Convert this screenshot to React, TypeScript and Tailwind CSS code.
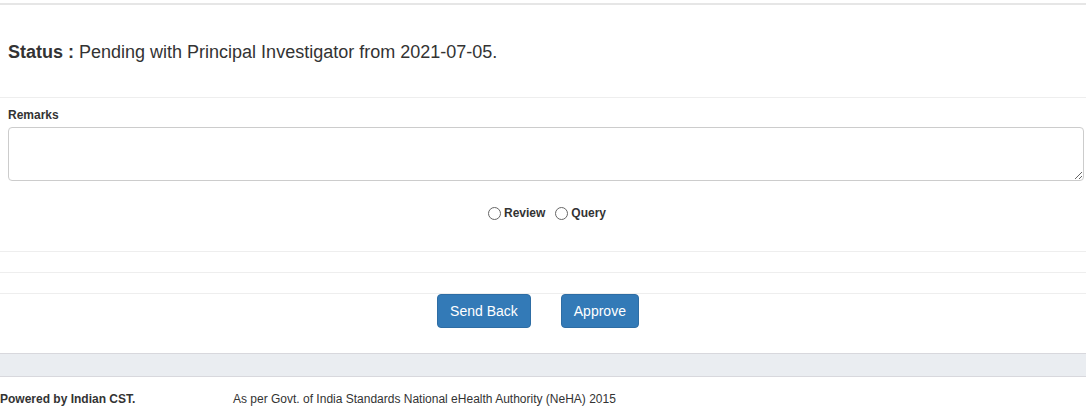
import React from "react";

function Radio({ label }: { label: string }) {
  return (
    <label className="flex items-center">
      <span className="w-[13px] h-[13px] rounded-full border border-[#666] bg-white mr-[3px]" />
      <span className="text-[12px] font-bold text-[#333]">{label}</span>
    </label>
  );
}

export default function App() {
  return (
    <div
      className="w-[1086px] h-[417px] bg-white text-[#333] overflow-hidden"
      style={{ fontFamily: '"Liberation Sans", Arial, sans-serif' }}
    >
      <div className="mt-[3px] border-t-2 border-[#e6e6e6]" />
      <div className="h-[92px] flex items-center pl-[8px] pt-[2px] text-[18px]">
        <span className="font-bold">Status :</span>
        <span className="ml-[5px]">Pending with Principal Investigator from 2021-07-05.</span>
      </div>
      <div className="border-t border-[#eeeeee]" />
      <div className="pl-[8px] pr-[2px] pt-[9px]">
        <div className="text-[12px] font-bold leading-[17px] h-[20px]">Remarks</div>
        <textarea className="block w-full h-[54px] border border-[#ccc] rounded-[4px] resize-y bg-white" />
      </div>
      <div className="h-[70px] flex justify-center items-start pt-[23px] gap-[10px] pl-[8px]">
        <Radio label="Review" />
        <Radio label="Query" />
      </div>
      <div className="border-t border-[#eeeeee] h-[21px]" />
      <div className="border-t border-[#eeeeee] h-[21px]" />
      <div className="border-t border-[#eeeeee] flex justify-center gap-[30px] pt-0 h-[60px] pr-[10px]">
        <button className="h-[34px] px-[12px] text-[14px] text-white bg-[#337ab7] border border-[#2e6da4] rounded-[4px]">
          Send Back
        </button>
        <button className="h-[34px] px-[12px] text-[14px] text-white bg-[#337ab7] border border-[#2e6da4] rounded-[4px]">
          Approve
        </button>
      </div>
      <div className="h-[24px] bg-[#eaedf1] border-y border-[#d8d8dd]" />
      <div className="flex items-center h-[44px] text-[12px]">
        <span className="font-bold w-[233px]">Powered by Indian CST.</span>
        <span>As per Govt. of India Standards National eHealth Authority (NeHA) 2015</span>
      </div>
    </div>
  );
}
